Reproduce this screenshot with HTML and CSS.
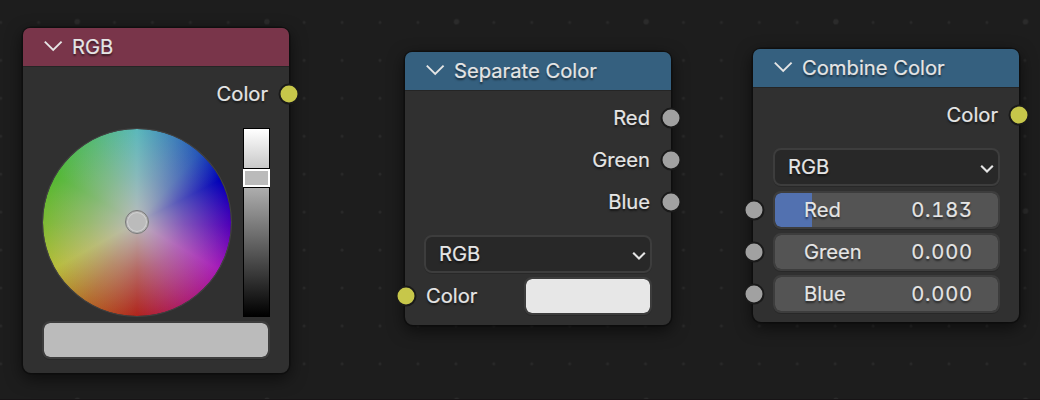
FILE: index.html
```html
<!DOCTYPE html>
<html lang="en">
<head>
<meta charset="utf-8">
<title>Color nodes</title>
<link rel="stylesheet" href="styles.css">
</head>
<body>
<main class="canvas">
  <svg class="grid" width="1040" height="400" aria-hidden="true">
    <defs>
      <pattern id="minor" x="-18.25" y="3.45" width="37.93" height="37.93" patternUnits="userSpaceOnUse"><circle cx="18.96" cy="18.96" r="1.5" fill="#292929"/></pattern>
      <pattern id="major" x="-17.5" y="-73.2" width="189.65" height="189.3" patternUnits="userSpaceOnUse"><circle cx="94.8" cy="94.8" r="2.6" fill="#2b2b2b"/></pattern>
    </defs>
    <rect width="1040" height="400" fill="url(#minor)"/>
    <rect width="1040" height="400" fill="url(#major)"/>
  </svg>

  <section class="node node-rgb">
    <header class="head head-input">
      <svg class="chevron" viewBox="0 0 20 12"><path d="M1.8 1.6 10.2 9.9 18.6 1.6"/></svg>
      <span class="title">RGB</span>
    </header>
    <div class="outputs">
      <div class="output">Color<i class="socket socket-out socket-color"></i></div>
    </div>
    <div class="picker">
      <div class="wheel"><i class="cursor"></i></div>
      <div class="value"><i class="handle"></i></div>
    </div>
    <div class="swatch swatch-gray"></div>
  </section>

  <section class="node node-separate">
    <header class="head head-convert">
      <svg class="chevron" viewBox="0 0 20 12"><path d="M1.8 1.6 10.2 9.9 18.6 1.6"/></svg>
      <span class="title">Separate Color</span>
    </header>
    <div class="outputs">
      <div class="output">Red<i class="socket socket-out"></i></div>
      <div class="output">Green<i class="socket socket-out"></i></div>
      <div class="output">Blue<i class="socket socket-out"></i></div>
    </div>
    <div class="fields">
      <div class="select"><span>RGB</span><svg class="arrow" viewBox="0 0 14 10"><path d="M1.2 1.7 7 7.6 12.8 1.7"/></svg></div>
      <div class="input-row"><i class="socket socket-in socket-color"></i><span>Color</span><div class="swatch swatch-light"></div></div>
    </div>
  </section>

  <section class="node node-combine">
    <header class="head head-convert">
      <svg class="chevron" viewBox="0 0 20 12"><path d="M1.8 1.6 10.2 9.9 18.6 1.6"/></svg>
      <span class="title">Combine Color</span>
    </header>
    <div class="outputs">
      <div class="output">Color<i class="socket socket-out socket-color"></i></div>
    </div>
    <div class="fields">
      <div class="select"><span>RGB</span><svg class="arrow" viewBox="0 0 14 10"><path d="M1.2 1.7 7 7.6 12.8 1.7"/></svg></div>
      <div class="input-row"><i class="socket socket-in"></i><div class="slider slider-red"><span>Red</span><span class="number">0.183</span></div></div>
      <div class="input-row"><i class="socket socket-in"></i><div class="slider"><span>Green</span><span class="number">0.000</span></div></div>
      <div class="input-row"><i class="socket socket-in"></i><div class="slider"><span>Blue</span><span class="number">0.000</span></div></div>
    </div>
  </section>
</main>
</body>
</html>
```
FILE: styles.css
```css
* { box-sizing: border-box; }

body {
  margin: 0;
  background: #1d1d1d;
  color: #e5e5e5;
  font: 400 20.2px/24px Inter, "Liberation Sans", sans-serif;
  -webkit-text-stroke: .2px #e5e5e5;
}

.canvas {
  position: relative;
  width: 1040px;
  height: 400px;
  overflow: hidden;
  border-bottom: 1px solid #171416;
  text-shadow: 0 2px 2px rgba(0, 0, 0, .55);
}

.grid { display: block; }

/* Nodes sit freely on the canvas */
.node {
  position: absolute;
  width: 266px;
  border-radius: 8px;
  background: #303030;
  box-shadow: 0 0 0 1.5px rgba(10, 10, 10, .6), 0 5px 16px 1px rgba(0, 0, 0, .55);
}
.node-rgb { left: 23px; top: 28px; height: 345px; }
.node-separate { left: 405px; top: 52px; height: 273px; }
.node-combine { left: 753px; top: 49px; height: 273px; }

.head {
  display: flex;
  align-items: center;
  gap: 9px;
  height: 38px;
  padding-left: 20px;
  border-radius: 7px 7px 0 0;
  box-shadow: 0 1px 0 rgba(0, 0, 0, .22);
}
.head-input { background: #79354a; }
.head-convert { background: #35607f; }

.chevron {
  width: 20px;
  height: 12px;
  margin-top: -2px;
}
.chevron path, .arrow path {
  fill: none;
  stroke: #e5e5e5;
  stroke-width: 1.9;
}

.outputs { padding: 7px 21px 0; }
.output {
  position: relative;
  display: flex;
  align-items: center;
  justify-content: flex-end;
  height: 42px;
}

.socket {
  position: absolute;
  width: 21px;
  height: 21px;
  top: 50%;
  margin-top: -11px;
  border: 2px solid #1a1a1a;
  border-radius: 50%;
  background: #a1a1a1;
  transform: translate(.5px, .6px);
}
.socket-color { background: #c7c74a; }
.socket-out { right: -31px; }
.socket-in { left: -30.5px; }

.fields {
  display: flex;
  flex-direction: column;
  gap: 4px;
  padding: 12px 19px 0;
}
.node-combine .fields { padding: 12px 19px 0 20px; }
.node-combine .select { margin-bottom: 1px; }
.node-separate .socket-in { left: -29.5px; }

.select, .slider, .swatch {
  height: 38px;
  border: 2px solid #3d3d3d;
  border-radius: 8px;
  box-shadow: 0 1px 0 rgba(0, 0, 0, .15);
}
.select {
  display: flex;
  align-items: center;
  justify-content: space-between;
  padding: 0 4px 0 13px;
  background: #282828;
}
.arrow {
  width: 14px;
  height: 10px;
  margin-top: 3px;
}
.arrow path { stroke-width: 2.1; }

.input-row {
  position: relative;
  display: flex;
  align-items: center;
  justify-content: space-between;
  height: 38px;
}
.input-row > span { padding-left: 2px; }

.slider {
  display: flex;
  flex: 1;
  align-items: center;
  justify-content: space-between;
  padding: 0 25px 0 29px;
  background: #545454 padding-box;
}
.slider-red {
  background: linear-gradient(90deg, #5271b0 37px, #545454 37px) padding-box;
}
.number {
  font-feature-settings: "tnum", "cv09";
  letter-spacing: .8px;
}

.swatch-light { width: 128px; background: #e7e7e7 padding-box; }
.swatch-gray { margin: 4px 19px 0; background: #bbb padding-box; }

.picker {
  display: flex;
  justify-content: space-between;
  padding: 13px 19px 0;
}
.wheel {
  position: relative;
  width: 190px;
  height: 189px;
  border: 1.5px solid #424242;
  border-radius: 50%;
  background:
    radial-gradient(circle closest-side, #bbb, rgba(187, 187, 187, .46) 50%, rgba(187, 187, 187, 0)),
    conic-gradient(#5bb8bb, #3f80b9 24deg, #2454b8 42deg, #0000b8 63deg, #2600b8 77deg, #5000b8 92deg, #a81cb8 120deg, #ad1f70 150deg, #b0241c 180deg, #b46c2b 212deg, #b8bd3c 241deg, #7db934 270deg, #53b834 300deg, #57b970 330deg, #5bb8bb) padding-box;
}
.cursor {
  position: absolute;
  left: 50%;
  top: 50%;
  width: 24px;
  height: 24px;
  margin: -12.5px 0 0 -12px;
  border: 1px solid #777;
  border-radius: 50%;
  background: #bbb;
  box-shadow: inset 0 0 0 1px #b0b0b0, inset 0 0 0 2px #d0d0d0;
}
.value {
  position: relative;
  width: 27px;
  height: 189px;
  border: 1px solid #000;
  background: linear-gradient(#fff, #bbb 26%, #000);
}
.handle {
  position: absolute;
  left: -1px;
  top: 40px;
  width: 27px;
  height: 18px;
  border: 2px solid #fff;
  background: #bbb;
  box-shadow: 0 -1px 0 #000, 0 1px 0 #000;
}
```
